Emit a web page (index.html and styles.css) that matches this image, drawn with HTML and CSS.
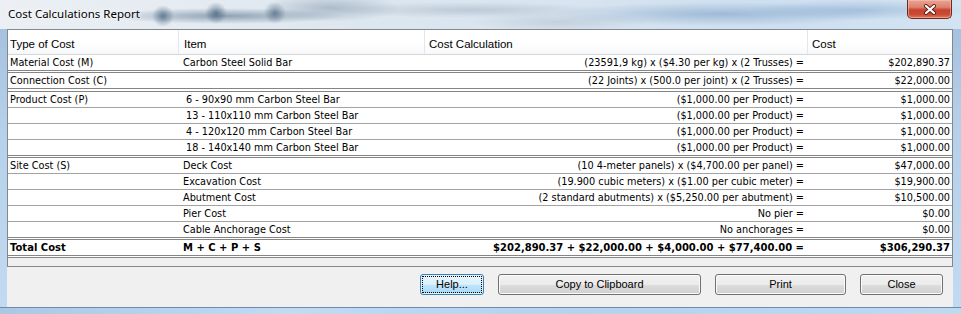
FILE: index.html
```html
<!DOCTYPE html>
<html>
<head>
<meta charset="utf-8">
<title>Cost Calculations Report</title>
<link rel="stylesheet" href="styles.css">
</head>
<body>
<div class="window">
  <div class="titlebar">
    <span class="title">Cost Calculations Report</span>
    <div class="close-btn">
      <svg width="14" height="11" viewBox="0 0 14 11">
        <path d="M3 2 L11 9 M11 2 L3 9" stroke="#5a2018" stroke-width="4" stroke-linecap="round"/>
        <path d="M3 2 L11 9 M11 2 L3 9" stroke="#ffffff" stroke-width="2.2" stroke-linecap="round"/>
      </svg>
    </div>
  </div>
  <div class="client">
    <div class="grid">
      <div class="row head">
        <div class="c c1">Type of Cost</div>
        <div class="c c2">Item</div>
        <div class="c c3">Cost Calculation</div>
        <div class="c c4">Cost</div>
      </div>
      <div class="row end">
        <div class="c c1">Material Cost (M)</div>
        <div class="c c2">Carbon Steel Solid Bar</div>
        <div class="c c3 r">(23591,9 kg) x ($4.30 per kg) x (2 Trusses) =</div>
        <div class="c c4 r">$202,890.37</div>
      </div>
      <div class="row end end4">
        <div class="c c1">Connection Cost (C)</div>
        <div class="c c2"></div>
        <div class="c c3 r">(22 Joints) x (500.0 per joint) x (2 Trusses) =</div>
        <div class="c c4 r">$22,000.00</div>
      </div>
      <div class="row">
        <div class="c c1">Product Cost (P)</div>
        <div class="c c2 ind">6 - 90x90 mm Carbon Steel Bar</div>
        <div class="c c3 r">($1,000.00 per Product) =</div>
        <div class="c c4 r">$1,000.00</div>
      </div>
      <div class="row">
        <div class="c c1"></div>
        <div class="c c2 ind">13 - 110x110 mm Carbon Steel Bar</div>
        <div class="c c3 r">($1,000.00 per Product) =</div>
        <div class="c c4 r">$1,000.00</div>
      </div>
      <div class="row">
        <div class="c c1"></div>
        <div class="c c2 ind">4 - 120x120 mm Carbon Steel Bar</div>
        <div class="c c3 r">($1,000.00 per Product) =</div>
        <div class="c c4 r">$1,000.00</div>
      </div>
      <div class="row end">
        <div class="c c1"></div>
        <div class="c c2 ind">18 - 140x140 mm Carbon Steel Bar</div>
        <div class="c c3 r">($1,000.00 per Product) =</div>
        <div class="c c4 r">$1,000.00</div>
      </div>
      <div class="row">
        <div class="c c1">Site Cost (S)</div>
        <div class="c c2">Deck Cost</div>
        <div class="c c3 r">(10 4-meter panels) x ($4,700.00 per panel) =</div>
        <div class="c c4 r">$47,000.00</div>
      </div>
      <div class="row">
        <div class="c c1"></div>
        <div class="c c2">Excavation Cost</div>
        <div class="c c3 r">(19.900 cubic meters) x ($1.00 per cubic meter) =</div>
        <div class="c c4 r">$19,900.00</div>
      </div>
      <div class="row">
        <div class="c c1"></div>
        <div class="c c2">Abutment Cost</div>
        <div class="c c3 r">(2 standard abutments) x ($5,250.00 per abutment) =</div>
        <div class="c c4 r">$10,500.00</div>
      </div>
      <div class="row">
        <div class="c c1"></div>
        <div class="c c2">Pier Cost</div>
        <div class="c c3 r">No pier =</div>
        <div class="c c4 r">$0.00</div>
      </div>
      <div class="row end">
        <div class="c c1"></div>
        <div class="c c2">Cable Anchorage Cost</div>
        <div class="c c3 r">No anchorages =</div>
        <div class="c c4 r">$0.00</div>
      </div>
      <div class="row end total">
        <div class="c c1">Total Cost</div>
        <div class="c c2">M + C + P + S</div>
        <div class="c c3 r">$202,890.37 + $22,000.00 + $4,000.00 + $77,400.00 =</div>
        <div class="c c4 r">$306,290.37</div>
      </div>
      <div class="filler"></div>
    </div>
    <div class="buttons">
      <button class="btn btn-help">Help...</button>
      <button class="btn btn-copy">Copy to Clipboard</button>
      <button class="btn btn-print">Print</button>
      <button class="btn btn-close">Close</button>
    </div>
  </div>
  <div class="bottom-frame"></div>
</div>
</body>
</html>
```

FILE: styles.css
```css
* { box-sizing: border-box; }

html, body {
  margin: 0;
  padding: 0;
  background: #b9d3ec;
}

.window {
  width: 961px;
  height: 314px;
  overflow: hidden;
  display: flex;
  flex-direction: column;
  background:
    linear-gradient(to bottom, #9fbddb 0%, #b6d0ea 40%, #c2dbf1 100%);
}

/* ---------- title bar (aero glass) ---------- */
.titlebar {
  height: 29px;
  flex: none;
  display: flex;
  align-items: flex-start;
  padding-left: 8px;
  background:
    radial-gradient(circle 11px at 163px 16px, rgba(45, 75, 105, 0.6), rgba(45, 75, 105, 0) 100%),
    radial-gradient(circle 11px at 216px 13px, rgba(45, 75, 105, 0.6), rgba(45, 75, 105, 0) 100%),
    radial-gradient(circle 11px at 275px 13px, rgba(45, 75, 105, 0.55), rgba(45, 75, 105, 0) 100%),
    radial-gradient(ellipse 120px 8px at 225px 16px, rgba(60, 90, 120, 0.5), rgba(60, 90, 120, 0) 100%),
    radial-gradient(ellipse 70px 14px at 330px 8px, rgba(80, 105, 130, 0.35), rgba(80, 105, 130, 0) 100%),
    radial-gradient(ellipse 140px 8px at 470px 10px, rgba(120, 140, 160, 0.30), rgba(120, 140, 160, 0) 100%),
    radial-gradient(ellipse 90px 10px at 560px 22px, rgba(130, 150, 170, 0.25), rgba(130, 150, 170, 0) 100%),
    radial-gradient(ellipse 170px 12px at 720px 14px, rgba(100, 140, 185, 0.45), rgba(100, 140, 185, 0) 100%),
    radial-gradient(ellipse 110px 10px at 860px 10px, rgba(110, 150, 195, 0.40), rgba(110, 150, 195, 0) 100%),
    linear-gradient(to right, #ecf0f4 0%, #e6ecf2 15%, #dce6ef 40%, #d8e4ef 60%, #cddff0 80%, #d3e3f2 100%);
}

.title {
  font-family: "Noto Sans", "Liberation Sans", sans-serif;
  font-size: 11.5px;
  line-height: 16px;
  margin-top: 6px;
  color: #000;
  text-shadow: 0 0 6px rgba(255, 255, 255, 0.9), 0 0 3px rgba(255, 255, 255, 0.9);
}

.close-btn {
  margin-left: auto;
  margin-right: 9px;
  width: 45px;
  height: 19px;
  border: 1px solid #6b2a22;
  border-top: none;
  border-radius: 0 0 5px 5px;
  background: linear-gradient(to bottom, #e8a493 0%, #dd8270 40%, #c8432d 55%, #c94a33 80%, #e07a5a 100%);
  box-shadow: inset 0 0 0 1px rgba(255, 200, 190, 0.5);
  display: flex;
  align-items: center;
  justify-content: center;
}

.close-btn svg { display: block; }

/* ---------- client area ---------- */
.client {
  flex: none;
  height: 278px;
  margin: 0 8px 0 7px;
  background: #f0f0f0;
  display: flex;
  flex-direction: column;
}

.grid {
  height: 238px;
  border: 1px solid #828790;
  background: #f0f0f0;
  display: flex;
  flex-direction: column;
}

.row {
  display: grid;
  grid-template-columns: 170px 246px 383px 1fr;
  height: 16px;
  background: #fff;
  border-bottom: 1px solid #a3a3a3;
  font-family: "DejaVu Sans Condensed", "Liberation Sans", sans-serif;
  font-size: 10.8px;
  line-height: 15px;
  color: #000;
}

.row.end {
  height: 18px;
  border-bottom: 3px double #858585;
}

.row.end4 {
  height: 19px;
  border-bottom: 4px double #858585;
}

.row.head {
  height: 25px;
  border-bottom: 1px solid #d5d5d5;
  background: linear-gradient(to bottom, #ffffff 0%, #ffffff 50%, #f7f8fa 100%);
  font-family: "Liberation Sans", sans-serif;
  font-size: 11.5px;
  line-height: 24px;
}

.row.head .c {
  padding-top: 2px;
  border-left: 1px solid #e3e6ea;
}

.row.head .c1 { border-left: none; }

.c {
  white-space: nowrap;
  overflow: hidden;
}

.c1 { padding-left: 2px; }
.c2 { padding-left: 5px; }
.c3 { padding-left: 5px; padding-right: 3px; }
.c4 { padding-left: 5px; padding-right: 2px; }
.row.head .c3, .row.head .c4 { padding-left: 4px; }
.c2.ind { padding-left: 8px; }
.r { text-align: right; }

.row.total {
  font-family: "DejaVu Sans", sans-serif;
  font-weight: bold;
  font-size: 10px;
}

.filler {
  flex: 1;
  background: #f0f0f0;
}

/* ---------- buttons ---------- */
.buttons {
  flex: 1;
  display: flex;
  justify-content: flex-end;
  align-items: flex-start;
  gap: 14px;
  padding: 7px 10px 0 0;
}

.btn {
  height: 21px;
  padding: 0;
  border: 1px solid #707070;
  border-radius: 3px;
  background: linear-gradient(to bottom, #f2f2f2 0%, #ebebeb 50%, #dddddd 51%, #cfcfcf 100%);
  box-shadow: inset 0 0 0 1px #fbfbfb;
  font-family: "Liberation Sans", sans-serif;
  font-size: 11px;
  color: #000;
  line-height: 19px;
}

.btn-help {
  width: 64px;
  border-color: #3c7fb1;
  background: linear-gradient(to bottom, #eaf6fd 0%, #d9f0fc 50%, #bee6fd 51%, #a7d9f5 100%);
  box-shadow: inset 0 0 0 1px #dff2fc;
  outline: 1px dotted #000;
  outline-offset: -3px;
}

.btn-copy { width: 203px; }
.btn-print { width: 131px; }
.btn-close { width: 83px; }

.bottom-frame {
  flex: 1;
  border-top: 1px solid #6f8aa6;
  background: linear-gradient(to right, #aac8e6 0%, #c0dbf2 30%, #b5d2ee 60%, #bfd9f1 100%);
}
```
